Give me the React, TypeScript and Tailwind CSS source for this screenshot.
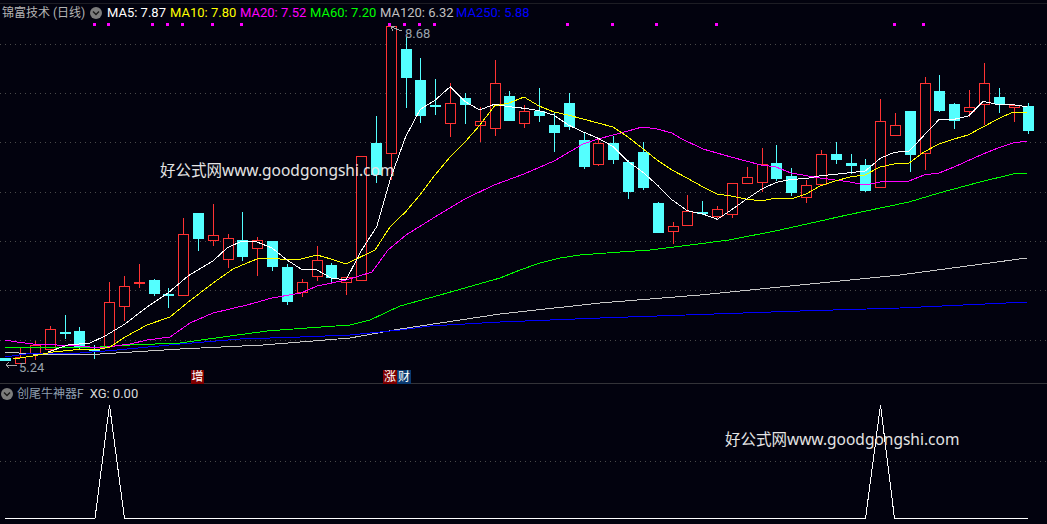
// [high, bodyTop, bodyBottom, low, up]  up = red outline, otherwise cyan fill
type Candle = [number, number, number, number, 0 | 1]

const candles: Candle[] = [
  [358, 358, 361, 361, 0], [348, 357, 364, 364, 1], [341, 345, 354, 360, 1], [326, 329, 350, 351, 1],
  [315, 332, 334, 339, 0], [327, 331, 348, 349, 0], [345, 349, 351, 359, 0], [282, 302, 347, 348, 1],
  [276, 286, 307, 321, 1], [264, 282, 284, 288, 1], [279, 280, 294, 296, 0], [288, 294, 296, 308, 0],
  [218, 234, 296, 296, 1], [213, 213, 239, 251, 0], [204, 235, 241, 246, 1], [234, 238, 260, 268, 1],
  [212, 240, 257, 261, 0], [237, 240, 249, 276, 1], [241, 241, 267, 271, 0], [264, 267, 302, 305, 0],
  [279, 282, 293, 297, 1], [246, 260, 277, 281, 1], [263, 265, 278, 282, 0], [277, 277, 283, 295, 1],
  [156, 156, 281, 281, 1], [116, 143, 175, 183, 0], [26, 26, 154, 180, 1], [37, 49, 78, 108, 0],
  [58, 80, 116, 123, 0], [79, 105, 107, 115, 0], [83, 103, 124, 137, 1], [93, 98, 105, 124, 0],
  [107, 121, 126, 142, 1], [60, 83, 129, 136, 1], [91, 96, 121, 121, 0], [105, 111, 124, 128, 1],
  [88, 111, 116, 122, 0], [113, 125, 133, 152, 0], [93, 103, 127, 130, 0], [133, 140, 167, 169, 0],
  [138, 143, 165, 166, 1], [136, 143, 160, 164, 0], [160, 162, 192, 199, 0], [142, 152, 188, 190, 0],
  [202, 203, 233, 233, 0], [222, 226, 232, 244, 1], [195, 211, 226, 226, 1], [201, 212, 214, 215, 0],
  [206, 209, 217, 218, 1], [183, 183, 215, 218, 1], [167, 177, 184, 184, 1], [148, 164, 183, 192, 1],
  [145, 163, 179, 181, 0], [168, 176, 193, 196, 0], [180, 185, 198, 203, 1], [150, 154, 185, 185, 1],
  [142, 154, 160, 164, 0], [154, 163, 166, 174, 0], [159, 165, 191, 192, 0], [99, 121, 188, 188, 1],
  [113, 125, 136, 136, 1], [111, 111, 155, 172, 0], [77, 83, 154, 170, 1], [75, 91, 111, 112, 0],
  [103, 104, 121, 129, 0], [90, 107, 112, 117, 1], [63, 83, 105, 125, 1], [88, 97, 104, 113, 0],
  [105, 105, 108, 122, 1], [103, 106, 131, 134, 0],
]

const ma5 = '48,352 68,345 90,343 105,336 125,324 147,307 168,293 188,276 213,261 227,248 242,241 257,242 272,248 287,260 301,269 317,270 331,278 346,280 361.7,250 376.7,226.7 390.7,178 405.7,136.7 420.3,109.3 435.3,100 450.3,86.7 465.3,101.7 479.7,110 494.3,104.3 509.3,106.7 524.3,108.3 539.3,110.7 553.7,115 568.3,125 583.3,132 598.3,138.3 613.3,146.7 628.3,161.7 642.3,171.7 657.3,185 672.3,200 687.3,210.7 702.7,214 717.3,219.3 731.3,210 746.3,199.3 761.3,189.3 776.3,182.3 791.3,179.3 805.7,178.7 820.3,175.7 835.3,174.3 850.3,172.7 865.3,171 880.3,158.3 894.3,152.3 909.3,151 924.3,135 939.3,119.3 954.3,119.3 968.3,116 983.3,101.3 998.3,104.7 1013.3,104.7 1027,106.7'
const ma10 = '13,359 33,356 53,352 73,350 100,349 110,347 125,337 147,325 170,317 187,303 213,283 233,269 247,263 257,259 272,258 287,260 301,259 317,255 331,259 346,264 375,250 390,227 405.7,211.7 420,195 435,175 450,157 465,142 480,125 494.3,106 509,103 524,97 539,106 554,112 568,115 583,119 598,123 613,127 628,137 642,148 657,160 672,170 687,178 703,187 717,194 731,196 746,199 761,201 776,198 791,199 806,194 820,186 835,181 850,177 865,175 880,167 894,164 909,163 924,152 939,144 954,139 968,135 983,127 998,119 1013,112 1027,112'
const ma20 = '5,340 17,342 33,344 57,345 80,346 100,348 130,344 147,340 170,337 190,323 213,313 247,305 272,298 301,293 317,286 346,280 372,272 388,250 406,235 435,217 465,199 494,185 524,174 554,161 583,144 598,139 628,131 642,127 657,129 672,133 680,138 703,149 731,157 761,165 776,167 791,173 820,178 835,180 850,182 865,185 880,182 909,181 924,175 939,173 954,167 983,154 998,148 1013,143 1027,141'
const ma60 = '5,347 100,347 130,345 180,343 230,336 267,331 307,328 350,325 370,320 385,313 400,306 440,295 500,278 520,270 540,263 560,258 580,255 620,252 650,250 690,245 729,240 780,230 847,215 909,202 939,193 980,182 1013,174 1027,173'
const ma120 = '5,352 33,354 100,354 180,349 263,345 350,338 400,329 500,314 600,303 700,295 800,285 900,275 1027,258'
const ma250 = '5,357 33,353 80,353 117,350 180,344 240,339 300,337 350,335 400,330 430,326 500,322 600,318 800,311 900,308 1027,302'

const markers = [94, 108, 152, 167, 182, 212, 241, 389, 404, 419, 434, 567, 612, 656, 716, 894, 923]
const topGrid = [44, 93, 142, 192, 241, 290, 340]

function CollapseDot() {
  return (
    <span className="flex size-3 shrink-0 items-center justify-center rounded-full bg-[#7c7c7c]">
      <svg width="8" height="6" viewBox="0 0 8 6" fill="none">
        <path d="M1 1.5 L4 4.5 L7 1.5" stroke="#1a1a1a" strokeWidth="1.4" />
      </svg>
    </span>
  )
}

function Watermark({ className }: { className: string }) {
  return (
    <span className={`absolute text-[15.5px] leading-5 whitespace-nowrap text-[#e4e4e4] font-['Noto_Sans','Noto_Sans_CJK_SC',sans-serif] ${className}`}>
      好公式网www.goodgongshi.com
    </span>
  )
}

function PriceChart() {
  return (
    <svg className="absolute top-0 left-0" width="1047" height="384" shapeRendering="crispEdges" fill="none">
      <rect x="0" y="3" width="1047" height="1" fill="#1d1d24" />
      {topGrid.map((y) => (
        <line key={y} x1="0" x2="1047" y1={y + 0.5} y2={y + 0.5} stroke="#4a4a4a" strokeDasharray="1 4" />
      ))}
      {markers.map((x) => (
        <rect key={x} x={x - 1} y="23" width="3" height="3" fill="#ff00ff" />
      ))}
      {candles.map(([high, top, bottom, low, up], i) => {
        const x = Math.round(5.2 + 14.83 * i)
        const color = up ? '#ff3333' : '#54ffff'
        const flat = bottom - top <= 2
        return (
          <g key={i}>
            <rect x={x} y={high} width="1" height={top - high} fill={color} />
            <rect x={x} y={bottom} width="1" height={low - bottom} fill={color} />
            {up && !flat ? (
              <rect x={x - 4.5} y={top + 0.5} width="10" height={bottom - top - 1} stroke={color} fill="#02020e" />
            ) : (
              <rect x={x - 5} y={top} width="11" height={bottom - top} fill={color} />
            )}
          </g>
        )
      })}
      <polyline points={ma120} stroke="#c8c8c8" />
      <polyline points={ma250} stroke="#0000ff" />
      <polyline points={ma60} stroke="#00ff00" />
      <polyline points={ma20} stroke="#ff00ff" />
      <polyline points={ma10} stroke="#ffff00" />
      <polyline points={ma5} stroke="#ffffff" />
      {/* high / low arrows */}
      <path d="M391 27 L402 31 M391 27 L395 26 M391 27 L393 31" stroke="#a8a8a8" />
      <path d="M6 365 L17 365 M6 365 L9 362 M6 365 L9 368" stroke="#a8a8a8" />
    </svg>
  )
}

function SignalChart() {
  return (
    <svg className="absolute top-0 left-0" width="1047" height="139" shapeRendering="crispEdges" fill="none">
      <line x1="0" x2="1047" y1="77.5" y2="77.5" stroke="#4a4a4a" strokeDasharray="1 4" />
      <polyline
        points="5,134.5 95,134.5 109.5,21 124.5,134.5 865.5,134.5 880.5,21 894.5,134.5 1028,134.5"
        stroke="#ffffff"
      />
    </svg>
  )
}

export default function App() {
  return (
    <div className="flex h-[524px] w-[1047px] flex-col overflow-hidden bg-[#02020e] font-['Roboto','Noto_Sans_CJK_SC',sans-serif] text-[13px] leading-none">
      <div className="relative h-[384px] shrink-0 border-b border-[#333338]">
        <PriceChart />
        <div className="relative flex h-[25px] items-center pl-[2px]">
          <span className="w-[88px] text-[12px] whitespace-nowrap text-[#b4b4b4]">锦富技术 (日线)</span>
          <CollapseDot />
          <div className="ml-[5px] flex gap-[6px] whitespace-nowrap">
            <span className="w-[57px] text-white">MA5: 7.87</span>
            <span className="w-[64px] text-[#ffff00]">MA10: 7.80</span>
            <span className="w-[64px] text-[#ff00ff]">MA20: 7.52</span>
            <span className="w-[64px] text-[#00ff00]">MA60: 7.20</span>
            <span className="w-[70px] text-[#c0c0c0]">MA120: 6.32</span>
            <span className="w-[70px] text-[#0000ff]">MA250: 5.88</span>
          </div>
        </div>
        <span className="absolute top-[27px] left-[405px] text-[#9aa4ae]">8.68</span>
        <span className="absolute top-[361px] left-[19px] text-[#9aa4ae]">5.24</span>
        <Watermark className="top-[160px] left-[160px]" />
        <div className="absolute top-[370px] left-[191px] flex h-[14px] w-[13px] items-center justify-center bg-[#800000] text-[12px] text-white">增</div>
        <div className="absolute top-[370px] left-[383px] flex text-[12px] text-white">
          <span className="flex h-[14px] w-[14px] items-center justify-center bg-[#800000]">涨</span>
          <span className="flex h-[14px] w-[14px] items-center justify-center bg-[#0a3a70]">财</span>
        </div>
      </div>
      <div className="relative flex-1">
        <SignalChart />
        <div className="relative flex h-[17px] items-center gap-1 pt-[2px] pl-[1px] whitespace-nowrap">
          <CollapseDot />
          <span className="text-[12px] text-[#8f9fae]">创尾牛神器F</span>
          <span className="ml-[2px] text-[#d8d8d8]">XG: 0.00</span>
        </div>
        <Watermark className="top-[45px] left-[725px]" />
      </div>
    </div>
  )
}
